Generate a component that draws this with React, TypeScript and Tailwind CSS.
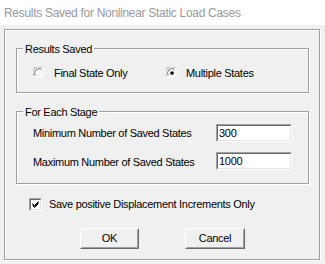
import React from 'react';

const font = { fontFamily: '"Liberation Sans", Arial, sans-serif' };

function Radio({ checked }: { checked?: boolean }) {
  return (
    <svg width="12" height="12" viewBox="0 0 12 12" className="shrink-0">
      <circle cx="6" cy="6" r="5" fill="#ffffff" />
      <path d="M1.2 9 A5.5 5.5 0 0 1 9 1.2" fill="none" stroke="#a0a0a0" strokeWidth="1" />
      <path d="M2.3 8.2 A4.3 4.3 0 0 1 8.2 2.3" fill="none" stroke="#696969" strokeWidth="1" />
      <path d="M9 1.2 A5.5 5.5 0 0 1 1.2 9" fill="none" stroke="#ffffff" strokeWidth="1" />
      <path d="M8.2 2.3 A4.3 4.3 0 0 1 2.3 8.2" fill="none" stroke="#e3e3e3" strokeWidth="1" />
      {checked && <circle cx="6" cy="6" r="1.8" fill="#000000" />}
    </svg>
  );
}

function Checkbox() {
  return (
    <div className="w-[13px] h-[13px] shrink-0 border border-t-[#a0a0a0] border-l-[#a0a0a0] border-r-white border-b-white">
      <div className="w-full h-full bg-white border border-t-[#696969] border-l-[#696969] border-r-[#e3e3e3] border-b-[#e3e3e3]">
        <svg width="9" height="9" viewBox="0 0 9 9">
          <path d="M1.5 3.5 L3.5 5.5 L7.5 1.5 M1.5 4.5 L3.5 6.5 L7.5 2.5 M1.5 5.5 L3.5 7.5 L7.5 3.5" fill="none" stroke="#000" strokeWidth="1" />
        </svg>
      </div>
    </div>
  );
}

function Field({ value }: { value: string }) {
  return (
    <div className="w-[76px] h-[18px] border border-t-[#a0a0a0] border-l-[#a0a0a0] border-r-white border-b-white">
      <div className="w-full h-full bg-white border border-t-[#696969] border-l-[#696969] border-r-[#e3e3e3] border-b-[#e3e3e3] flex items-center pl-[1px] text-[11px] leading-none text-black">
        {value}
      </div>
    </div>
  );
}

function Button({ label, width }: { label: string; width: string }) {
  return (
    <div className={`${width} h-[21px] border border-t-white border-l-white border-r-[#696969] border-b-[#696969]`}>
      <div className="w-full h-full border border-t-[#f0f0f0] border-l-[#f0f0f0] border-r-[#a0a0a0] border-b-[#a0a0a0] flex items-center justify-center text-[11px] text-black bg-[#f0f0f0]">
        {label}
      </div>
    </div>
  );
}

export default function App() {
  return (
    <div className="w-[325px] h-[264px] bg-[#f0f0f0] overflow-hidden tracking-[-0.3px]" style={font}>
      {/* Title bar */}
      <div className="h-[25px] bg-white flex items-center pl-[4px] text-[12px] text-[#999999]">
        Results Saved for Nonlinear Static Load Cases
      </div>

      <div className="ml-[4px] mt-[4px] w-[316px] h-[231px] border border-[#a0a0a0] shadow-[inset_1px_1px_0_#ffffff,1px_1px_0_#ffffff] px-[11px] pt-[12px] text-[11px] text-black">
        {/* Results Saved */}
        <fieldset className="w-[293px] h-[51px] border border-[#a0a0a0] shadow-[inset_1px_1px_0_#ffffff,1px_1px_0_#ffffff] px-[6px]">
          <legend className="px-[2px] leading-[13px] translate-y-[1px]">Results Saved</legend>
          <div className="flex items-center h-[20px] mt-[8px] pl-[10px]">
            <Radio />
            <span className="ml-[9px] w-[112px]">Final State Only</span>
            <Radio checked />
            <span className="ml-[8px]">Multiple States</span>
          </div>
        </fieldset>

        {/* For Each Stage */}
        <fieldset className="w-[293px] h-[79px] mt-[12px] border border-[#a0a0a0] shadow-[inset_1px_1px_0_#ffffff,1px_1px_0_#ffffff] px-[6px]">
          <legend className="px-[2px] leading-[13px] translate-y-[1px]">For Each Stage</legend>
          <div className="flex flex-col gap-[10px] mt-[6px] pl-[10px]">
            <div className="flex items-center h-[18px]">
              <span className="w-[183px]">Minimum Number of Saved States</span>
              <Field value="300" />
            </div>
            <div className="flex items-center h-[18px]">
              <span className="w-[183px] translate-y-[1px]">Maximum Number of Saved States</span>
              <Field value="1000" />
            </div>
          </div>
        </fieldset>

        <div className="flex items-center h-[13px] mt-[14px] ml-[13px]">
          <Checkbox />
          <span className="ml-[7px]">Save positive Displacement Increments Only</span>
        </div>

        <div className="flex mt-[17px] ml-[64px] gap-[46px]">
          <Button label="OK" width="w-[59px]" />
          <Button label="Cancel" width="w-[60px]" />
        </div>
      </div>
    </div>
  );
}
